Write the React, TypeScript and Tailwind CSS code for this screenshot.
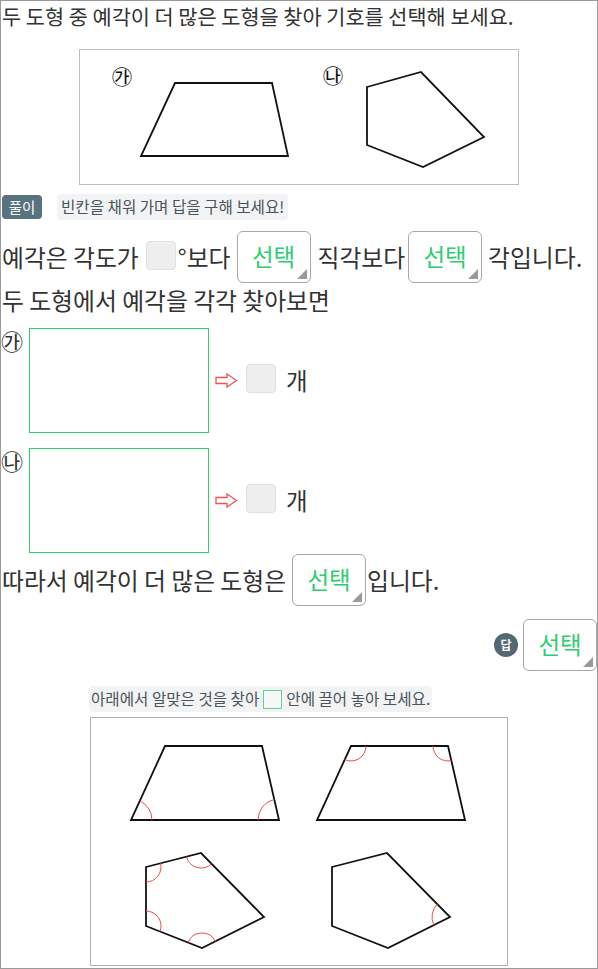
import React from 'react';

type Pt = [number, number];

// arc mark drawn inside the polygon at vertex i
function angleArc(pts: Pt[], i: number, r: number) {
  const v = pts[i];
  const a = pts[(i - 1 + pts.length) % pts.length];
  const b = pts[(i + 1) % pts.length];
  const unit = (p: Pt): Pt => {
    const dx = p[0] - v[0];
    const dy = p[1] - v[1];
    const len = Math.hypot(dx, dy);
    return [dx / len, dy / len];
  };
  const ua = unit(a);
  const ub = unit(b);
  const cross = ua[0] * ub[1] - ua[1] * ub[0];
  const sweep = cross > 0 ? 1 : 0;
  const s = [v[0] + ua[0] * r, v[1] + ua[1] * r];
  const e = [v[0] + ub[0] * r, v[1] + ub[1] * r];
  return `M ${s[0]} ${s[1]} A ${r} ${r} 0 0 ${sweep} ${e[0]} ${e[1]}`;
}

const toPoints = (pts: Pt[]) => pts.map(p => p.join(',')).join(' ');

function Shape({ pts, marks = [], r = 15 }: { pts: Pt[]; marks?: number[]; r?: number }) {
  return (
    <g>
      <polygon points={toPoints(pts)} fill="none" stroke="#111" strokeWidth={1.8} strokeLinejoin="miter" />
      {marks.map(i => (
        <path key={i} d={angleArc(pts, i, r)} fill="none" stroke="#f04a4a" strokeWidth={1} />
      ))}
    </g>
  );
}

function SelectBox() {
  return (
    <span className="relative inline-flex items-center justify-center w-[74px] h-[52px] shrink-0 bg-white border border-[#a8a8a8] rounded-[6px] text-[23.5px] text-[#2ecc71]">
      선택
      <span className="absolute right-[3px] bottom-[3px] w-0 h-0 border-l-[10px] border-l-transparent border-b-[10px] border-b-[#9a9a9a]" />
    </span>
  );
}

function Blank() {
  return <span className="inline-block w-[30px] h-[29px] shrink-0 bg-[#eeeeee] border border-[#e0e0e0] rounded-[4px]" />;
}

function Arrow() {
  return (
    <svg width="23" height="15" viewBox="0 0 23 15" className="shrink-0">
      <polygon points="1,4.5 12,4.5 12,1 21.5,7.5 12,14 12,10.5 1,10.5" fill="#fff" stroke="#f25555" strokeWidth={1.3} />
    </svg>
  );
}

function CountRow({ label }: { label: string }) {
  return (
    <div className="flex items-center h-[105px]">
      <span className="self-start text-[22px] leading-[24px] w-[23px] shrink-0">{label}</span>
      <div className="ml-[5px] w-[180px] h-[105px] border-[1.5px] border-[#33cc70] shrink-0" />
      <span className="ml-[6px]"><Arrow /></span>
      <span className="ml-[8px]"><Blank /></span>
      <span className="ml-[10px] text-[23.5px]">개</span>
    </div>
  );
}

export default function App() {
  const trapA: Pt[] = [[96, 34], [193, 34], [209, 107], [62, 107]];
  const pentB: Pt[] = [[288, 38], [342, 23], [405, 88], [344, 118], [288, 96]];

  const trap1: Pt[] = [[75, 29], [172, 29], [189, 103], [41, 103]];
  const trap2: Pt[] = [[261, 29], [358, 29], [375, 103], [227, 103]];
  const pent1: Pt[] = [[56, 150], [111, 136], [174, 200], [112, 231], [56, 209]];
  const pent2: Pt[] = [[242, 150], [297, 136], [360, 200], [298, 231], [242, 209]];

  return (
    <div className="w-[598px] h-[969px] border border-[#9a9a9a] overflow-hidden bg-white text-[#333] font-['Noto_Sans_CJK_KR','Noto_Sans',sans-serif]">
      {/* Question */}
      <p className="pl-[1px] text-[20.8px] leading-[30px] whitespace-nowrap">
        두 도형 중 예각이 더 많은 도형을 찾아 기호를 선택해 보세요.
      </p>

      <div className="mx-auto mt-[18px] w-[440px] h-[136px] border border-[#bdbdbd]">
        <svg width="438" height="134" viewBox="0 0 438 134" overflow="visible">
          <g transform="translate(-1 -1)">
            <text x="43" y="27" fontSize="20.5" textAnchor="middle" dominantBaseline="central" fill="#111" fontFamily="Noto Sans CJK KR">㉮</text>
            <text x="254" y="26" fontSize="20.5" textAnchor="middle" dominantBaseline="central" fill="#111" fontFamily="Noto Sans CJK KR">㉯</text>
            <Shape pts={trapA} />
            <Shape pts={pentB} />
          </g>
        </svg>
      </div>

      {/* Solution header */}
      <div className="mt-[9px] flex items-center h-[26px]">
        <span className="ml-[1px] w-[40px] h-[24px] rounded-[4px] bg-[#587380] text-white text-[14.5px] flex items-center justify-center">풀이</span>
        <span className="ml-[15px] h-[26px] px-[4px] rounded-[4px] bg-[#f2f3f5] text-[#4b5459] text-[15.6px] flex items-center whitespace-nowrap">빈칸을 채워 가며 답을 구해 보세요!</span>
      </div>

      {/* Fill-in line */}
      <div className="mt-[11px] flex items-center h-[52px] text-[23.8px] whitespace-nowrap">
        <span className="pl-[1px]">예각은 각도가</span>
        <span className="ml-[7px] mt-[5px]"><Blank /></span>
        <span className="ml-[2px] w-[9px]">°</span>
        <span>보다</span>
        <span className="ml-[6px]"><SelectBox /></span>
        <span className="ml-[7px]">직각보다</span>
        <span className="ml-[3px]"><SelectBox /></span>
        <span className="ml-[6px]">각입니다.</span>
      </div>

      <p className="mt-[1px] pl-[1px] text-[23.8px] leading-[32px] whitespace-nowrap">두 도형에서 예각을 각각 찾아보면</p>

      <div className="mt-[12px]">
        <CountRow label="㉮" />
      </div>
      <div className="mt-[15px]">
        <CountRow label="㉯" />
      </div>

      <div className="mt-[1px] flex items-center h-[52px] text-[23.8px] whitespace-nowrap">
        <span className="pl-[1px]">따라서 예각이 더 많은 도형은</span>
        <span className="ml-[6px]"><SelectBox /></span>
        <span className="ml-[1px]">입니다.</span>
      </div>

      {/* Answer */}
      <div className="mt-[13px] flex items-center justify-end h-[52px]">
        <span className="w-[24px] h-[24px] rounded-full bg-[#536872] text-white text-[12px] font-bold flex items-center justify-center">답</span>
        <span className="ml-[5px]"><SelectBox /></span>
      </div>

      {/* Drag source */}
      <div className="mx-auto mt-[15px] w-[418px]">
        <div className="-ml-[1px] inline-flex items-center h-[26px] px-[2px] rounded-[4px] bg-[#f2f3f5] text-[#4b5459] text-[15.6px] whitespace-nowrap">
          아래에서 알맞은 것을 찾아
          <span className="mx-[4px] inline-block w-[19px] h-[19px] border-[1.5px] border-[#5fd68a] bg-[#f7f7f7]" />
          안에 끌어 놓아 보세요.
        </div>
        <div className="mt-[5px] w-[418px] h-[249px] border border-[#b0b0b0]">
          <svg width="416" height="247" viewBox="0 0 416 247" overflow="visible">
            <g transform="translate(-1 -1)">
              <Shape pts={trap1} marks={[2, 3]} r={21} />
              <Shape pts={trap2} marks={[0, 1]} r={15} />
              <Shape pts={pent1} marks={[0, 1, 3, 4]} r={15} />
              <Shape pts={pent2} marks={[2]} r={18} />
            </g>
          </svg>
        </div>
      </div>
    </div>
  );
}
